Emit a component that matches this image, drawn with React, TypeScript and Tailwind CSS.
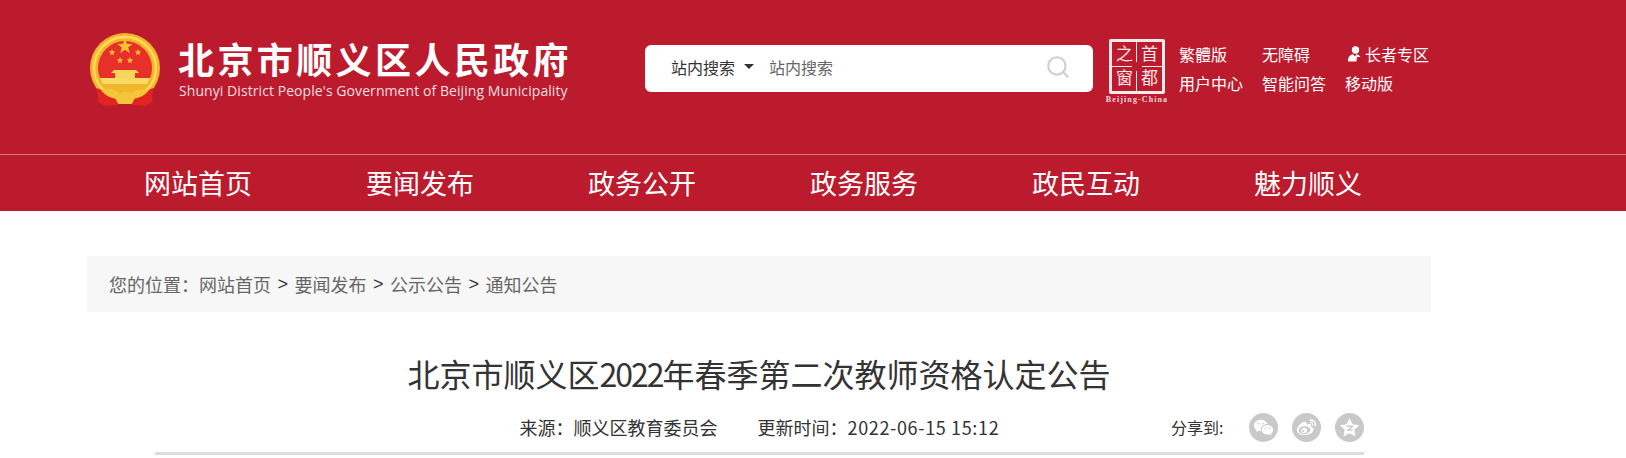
import { Search } from "lucide-react";
import { RiWechatFill, RiWeiboFill } from "react-icons/ri";

const navItems = ["网站首页", "要闻发布", "政务公开", "政务服务", "政民互动", "魅力顺义"];

const crumbs = ["网站首页", "要闻发布", "公示公告", "通知公告"];

function Star({ cx, cy, r }: { cx: number; cy: number; r: number }) {
  const points = Array.from({ length: 10 }, (_, i) => {
    const radius = i % 2 === 0 ? r : r * 0.42;
    const angle = (Math.PI / 5) * i - Math.PI / 2;
    return `${cx + radius * Math.cos(angle)},${cy + radius * Math.sin(angle)}`;
  }).join(" ");
  return <polygon points={points} fill="#f7c52e" />;
}

function Emblem() {
  return (
    <svg width="80" height="84" viewBox="0 0 80 84" className="shrink-0">
      <circle cx="40" cy="43" r="35" fill="#f2b62c" />
      <circle cx="40" cy="43" r="31" fill="none" stroke="#fbd95e" strokeWidth="2.5" />
      <path d="M13 43 A27 27 0 0 1 67 43 C67 47 66 50 65 53 H15 C14 50 13 47 13 43 Z" fill="#e7302a" />
      <path d="M29 45 H51 L54 48 H50 V53 H30 V48 H26 Z" fill="#f8d65a" />
      <path d="M15 53 H65 L62 59 H18 Z" fill="#f9da63" />
      <Star cx={40} cy={21.5} r={8} />
      <Star cx={27} cy={27.5} r={3.4} />
      <Star cx={53} cy={27.5} r={3.4} />
      <Star cx={35} cy={35.5} r={3.4} />
      <Star cx={45} cy={35.5} r={3.4} />
      <path d="M12 63 L30 71 L33 80 L20 81 L13 77 Z" fill="#e0241f" />
      <path d="M68 63 L50 71 L47 80 L60 81 L67 77 Z" fill="#e0241f" />
      <path d="M16 65 C24 63 31 65 35 69 C37 66 43 66 45 69 C49 65 56 63 64 65 C60 71 53 73 49 74 L47 79 H33 L31 74 C27 73 20 71 16 65 Z" fill="#f5c53a" />
    </svg>
  );
}

function BeijingLogo() {
  return (
    <div className="flex w-[64px] shrink-0 flex-col items-center">
      <div className="relative grid h-[55px] w-[56px] grid-cols-2 grid-rows-2 rounded-[2px] border-[3px] border-[#f7e9ea] font-['Liberation_Serif','Noto_Sans_CJK_SC',serif] text-[17px] leading-none text-[#f7e9ea]">
        <span className="flex items-center justify-center">之</span>
        <span className="flex items-center justify-center">首</span>
        <span className="flex items-center justify-center">窗</span>
        <span className="flex items-center justify-center">都</span>
        <span className="absolute left-[24px] top-0 h-[20px] w-px bg-[#f7e9ea]" />
        <span className="absolute bottom-0 left-[24px] h-[20px] w-px bg-[#f7e9ea]" />
        <span className="absolute left-0 top-[24px] h-px w-[20px] bg-[#f7e9ea]" />
        <span className="absolute right-0 top-[24px] h-px w-[20px] bg-[#f7e9ea]" />
      </div>
      <span className="mt-[1px] whitespace-nowrap font-['Liberation_Serif',serif] text-[8px] font-bold leading-[10px] tracking-[1.1px] text-[#f3d5d8]">
        Beijing-China
      </span>
    </div>
  );
}

function ElderIcon() {
  return (
    <svg width="15" height="16" viewBox="0 0 15 16" className="mr-[3px] shrink-0" fill="#fff">
      <circle cx="8.5" cy="4" r="3.7" />
      <path d="M1 15.5 C1 11 3 8.6 6 8.2 L8 10.6 L9.4 8.2 C11.6 8.6 12.8 9.8 13.4 11 L10 11 L9.4 15.5 Z" />
    </svg>
  );
}

function QzoneIcon() {
  return (
    <svg width="21" height="21" viewBox="0 0 24 24">
      <path d="M12 1.5 L15.4 8.3 L23 9.4 L17.5 14.6 L18.8 22.2 L12 18.6 L5.2 22.2 L6.5 14.6 L1 9.4 L8.6 8.3 Z" fill="#fff" />
      <path d="M8.5 10.5 H15.5 L10.5 15 H15.5" fill="none" stroke="#c9c9c9" strokeWidth="1.6" />
    </svg>
  );
}

export default function App() {
  return (
    <div className="h-[458px] w-full overflow-hidden bg-white font-['Noto_Sans_CJK_SC','Liberation_Sans',sans-serif]">
      <header className="flex h-[154px] items-start bg-[#bc1b2e] pl-[85px]">
        <div className="mt-[25px]">
          <Emblem />
        </div>
        <div className="ml-[13px] mt-[37px] w-[392px] text-white">
          <div className="whitespace-nowrap text-[36px] font-bold leading-[42px] tracking-[3.4px]">北京市顺义区人民政府</div>
          <div className="ml-[1px] mt-[3px] whitespace-nowrap font-['Open_Sans',sans-serif] text-[14px] leading-[18px] tracking-[0.07px] text-[#f5dfe1]">
            Shunyi District People's Government of Beijing Municipality
          </div>
        </div>
        <div className="ml-[75px] mt-[45px] flex h-[47px] w-[448px] items-center rounded-[6px] bg-white pb-[4px] pl-[26px] pr-[22px] text-[16px]">
          <span className="text-[#333]">站内搜索</span>
          <span className="ml-[9px] h-0 w-0 border-x-[5.5px] border-t-[5px] border-x-transparent border-t-[#333]" />
          <span className="ml-[15px] text-[#666]">站内搜索</span>
          <Search className="ml-auto text-[#cfcfcf]" size={26} strokeWidth={2} />
        </div>
        <div className="ml-[12px] mt-[39px]">
          <BeijingLogo />
        </div>
        <div className="ml-[10px] mt-[39px] grid grid-cols-[83px_83px_auto] grid-rows-[29px_29px] items-center whitespace-nowrap text-[16px] text-white">
          <span>繁體版</span>
          <span>无障碍</span>
          <span className="flex items-center pl-[2px]">
            <ElderIcon />
            长者专区
          </span>
          <span>用户中心</span>
          <span>智能问答</span>
          <span>移动版</span>
        </div>
      </header>

      <nav className="flex h-[57px] border-t border-[#d9747f] bg-[#bc1b2e] pl-[87px]">
        {navItems.map((item) => (
          <a key={item} className="flex w-[222px] items-center justify-center text-[27px] text-white">
            {item}
          </a>
        ))}
      </nav>

      <div className="ml-[87px] mt-[45px] w-[1344px]">
        <div className="flex h-[56px] items-center bg-[#f7f7f7] pl-[22px] text-[18px] text-[#666]">
          <span>您的位置：</span>
          {crumbs.map((crumb, i) => (
            <span key={crumb} className="flex items-center">
              {i > 0 && <span className="mx-[6.5px] font-['Liberation_Sans',sans-serif] text-[#333]">&gt;</span>}
              {crumb}
            </span>
          ))}
        </div>

        <div className="mx-auto mt-[34px] w-[1209px]">
          <h1 className="text-center text-[32px] font-normal leading-[54px] text-[#333]">
            北京市顺义区<span className="tracking-[-2px]">2022</span>年春季第二次教师资格认定公告
          </h1>
          <div className="flex h-[55px] items-center border-b-[3px] border-[#dddddd] pl-[365px] pt-[2px] text-[18px] text-[#333]">
            <span>来源：顺义区教育委员会</span>
            <span className="ml-[40px]">
              更新时间：<span className="tracking-[0.65px]">2022-06-15 15:12</span>
            </span>
            <span className="ml-auto text-[16px]">分享到:</span>
            <div className="ml-[25px] flex gap-[14px]">
              <span className="flex h-[29px] w-[29px] items-center justify-center rounded-full bg-[#c9c9c9] text-white">
                <RiWechatFill size={21} />
              </span>
              <span className="flex h-[29px] w-[29px] items-center justify-center rounded-full bg-[#c9c9c9] text-white">
                <RiWeiboFill size={21} />
              </span>
              <span className="flex h-[29px] w-[29px] items-center justify-center rounded-full bg-[#c9c9c9]">
                <QzoneIcon />
              </span>
            </div>
          </div>
        </div>
      </div>
    </div>
  );
}
